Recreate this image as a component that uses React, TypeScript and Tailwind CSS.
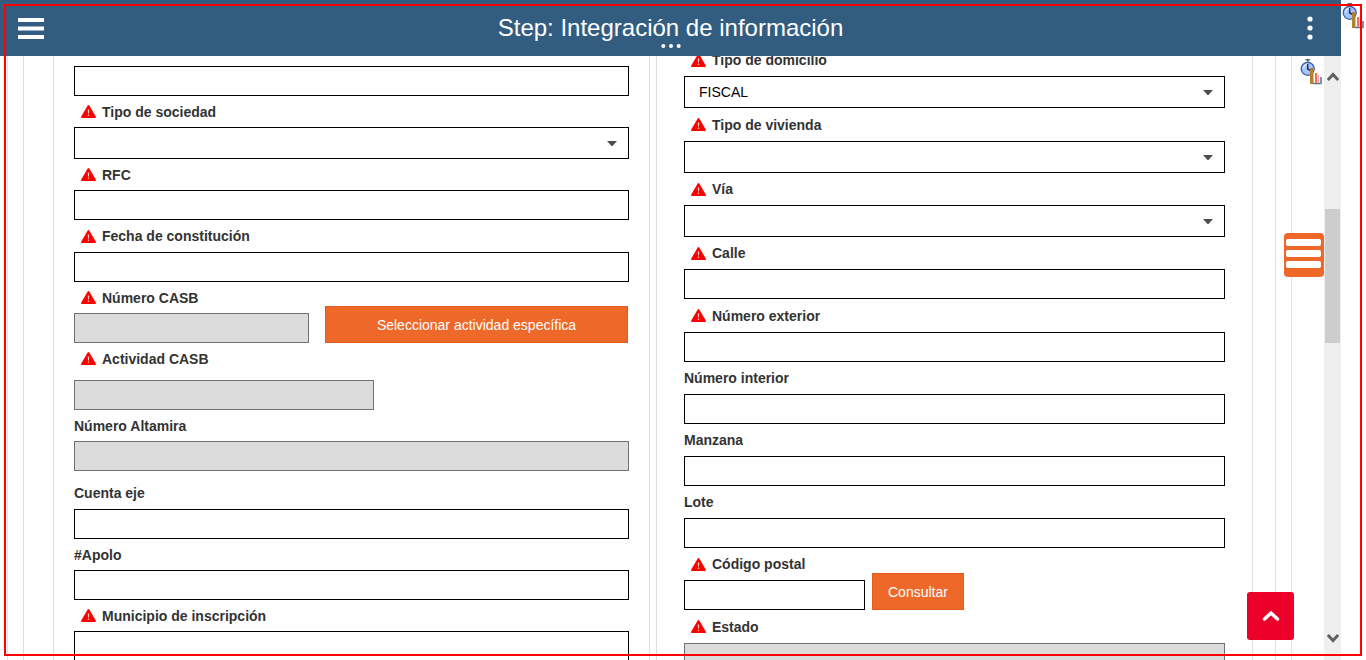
import type { ReactNode } from "react";

const labelHeights = {
  tight: "h-[31px]",
  normal: "h-[32px]",
  loose: "h-[33px]",
};

type Size = keyof typeof labelHeights;

function WarningIcon() {
  return (
    <svg viewBox="0 0 15 13" className="h-[13px] w-[15px] shrink-0" aria-hidden="true">
      <path d="M6.700.6a1 1 0 0 1 1.600 0l6.600 11.200a.8.8 0 0 1-.7 1.200H.8a.8.8 0 0 1-.7-1.200z" fill="#f00" />
      <path d="M6.800 4.500h1.400l-.2 4h-1z" fill="#ffd0d0" />
      <circle cx="7.500" cy="10.300" r=".8" fill="#ffd0d0" />
    </svg>
  );
}

function StopwatchIcon() {
  return (
    <svg viewBox="0 0 22 26" className="block h-[26px] w-[22px]" aria-hidden="true">
      <path d="M5.500.8h4.500M7.700 1v2.500" stroke="#47707c" strokeWidth="1.600" />
      <circle cx="7.700" cy="9.800" r="6.500" fill="#a3c4ff" stroke="#3d5c9c" strokeWidth="1.300" />
      <path d="M3.500 9.500a4.300 4.300 0 0 1 3.500-4" stroke="#dbe8ff" strokeWidth="1.500" fill="none" />
      <path d="M7.700 5v5l3 1.500" stroke="#1b2f78" strokeWidth="1.500" fill="none" />
      <path d="M13 24.500h8v-6" stroke="#56708c" strokeWidth="1.500" fill="none" />
      <path d="M10 9h3.500v16H10z" fill="#b08330" />
      <path d="M15 14h2.200v9.700H15z" fill="#ff6464" />
      <path d="M18 16h1v7.700h-1z" fill="#f7a0a0" />
      <path d="M20 18h2v7h-2z" fill="#7c93a8" />
    </svg>
  );
}

function FieldLabel({ id, text, required, size = "normal" }: { id: string; text: string; required?: boolean; size?: Size }) {
  return (
    <label htmlFor={id} className={`flex items-center gap-1.5 font-bold text-[#333] ${labelHeights[size]} ${required ? "pl-[7px]" : ""}`}>
      {required && <WarningIcon />}
      <span>{text}</span>
    </label>
  );
}

interface FieldProps {
  id: string;
  text: string;
  required?: boolean;
  disabled?: boolean;
  size?: Size;
  className?: string;
}

function TextField({ id, text, required, disabled, size, className = "" }: FieldProps) {
  return (
    <div className={className}>
      <FieldLabel id={id} text={text} required={required} size={size} />
      <TextBox id={id} disabled={disabled} />
    </div>
  );
}

function TextBox({ id, disabled, className = "w-full" }: { id: string; disabled?: boolean; className?: string }) {
  return (
    <input
      id={id}
      type="text"
      disabled={disabled}
      className={`block h-[30px] border border-black bg-white px-3.5 disabled:border-[#70707a] disabled:bg-[#dcdcdc] ${className}`}
    />
  );
}

function SelectField({ id, text, size, value }: { id: string; text: string; size?: Size; value?: string }) {
  return (
    <div>
      <FieldLabel id={id} text={text} required size={size} />
      <div className="relative">
        <select id={id} className="block h-8 w-full appearance-none border border-black bg-white px-3.5 text-black">
          <option>{value ?? ""}</option>
        </select>
        <svg viewBox="0 0 10 5" className="pointer-events-none absolute top-3.5 right-3 h-[5px] w-2.5" aria-hidden="true">
          <path d="M0 0h10L5.500 5h-1z" fill="#4d4d4d" />
        </svg>
      </div>
    </div>
  );
}

function ActionButton({ children, className = "" }: { children: ReactNode; className?: string }) {
  return (
    <button type="button" className={`h-[37px] border border-[#e35b1c] bg-[#ee6829] text-white ${className}`}>
      {children}
    </button>
  );
}

function CompanyPanel() {
  return (
    <section className="border-x border-[#ddd] px-5 pt-2.5">
      <input aria-label="Razón social" type="text" className="block h-[30px] w-full border border-black px-3.5" />
      <SelectField id="sociedad" text="Tipo de sociedad" size="tight" />
      <TextField id="rfc" text="RFC" required size="tight" />
      <TextField id="constitucion" text="Fecha de constitución" required />
      <div className="flex items-end gap-4 pr-px">
        <TextField id="casb" text="Número CASB" required disabled size="tight" className="w-[235px]" />
        <ActionButton className="flex-1">Seleccionar actividad específica</ActionButton>
      </div>
      <FieldLabel id="actividad" text="Actividad CASB" required size="tight" />
      <TextBox id="actividad" disabled className="mt-1.5 w-[300px]" />
      <TextField id="altamira" text="Número Altamira" disabled size="tight" />
      <TextField id="cuenta" text="Cuenta eje" className="mt-1.5" />
      <TextField id="apolo" text="#Apolo" size="tight" />
      <TextField id="municipio" text="Municipio de inscripción" required size="tight" />
    </section>
  );
}

function AddressPanel() {
  return (
    <section className="border-x border-[#ddd] px-[27px]">
      <div className="-mt-3">
        <SelectField id="domicilio" text="Tipo de domicilio" value="FISCAL" />
        <SelectField id="vivienda" text="Tipo de vivienda" size="loose" />
        <SelectField id="via" text="Vía" />
        <TextField id="calle" text="Calle" required />
        <TextField id="exterior" text="Número exterior" required size="loose" />
        <TextField id="interior" text="Número interior" />
        <TextField id="manzana" text="Manzana" />
        <TextField id="lote" text="Lote" />
        <div className="flex items-end gap-[7px]">
          <TextField id="postal" text="Código postal" required className="w-[181px]" />
          <ActionButton className="px-[15px]">Consultar</ActionButton>
        </div>
        <TextField id="estado" text="Estado" required disabled size="loose" />
      </div>
    </section>
  );
}

function ScrollRail() {
  return (
    <div className="flex w-[17px] shrink-0 flex-col items-center bg-[#efefef]" aria-hidden="true">
      <svg viewBox="0 0 12 9" className="mt-4 h-[9px] w-3">
        <path d="M.8 8L6 2.500 11.200 8" fill="none" stroke="#606060" strokeWidth="3" />
      </svg>
      <div className="mt-32 h-[134px] w-[15px] bg-[#cdcdcd]" />
      <svg viewBox="0 0 12 9" className="mt-auto mb-[17px] h-[9px] w-3">
        <path d="M.8 1L6 6.500 11.200 1" fill="none" stroke="#606060" strokeWidth="3" />
      </svg>
    </div>
  );
}

export default function App() {
  return (
    <div className="relative flex h-screen overflow-hidden bg-white font-['Liberation_Sans',Arial,sans-serif] text-[14px] leading-5">
      <div className="flex min-w-0 flex-1 flex-col">
        <header className="relative grid h-14 shrink-0 grid-cols-[1fr_auto_1fr] items-center bg-[#335d80] text-white">
          <button type="button" aria-label="Menú" className="ml-[18px] justify-self-start">
            <svg viewBox="0 0 26 21" className="block h-[21px] w-[26px]" aria-hidden="true">
              <path d="M0 2h26M0 10.500h26M0 19h26" stroke="#fff" strokeWidth="4" />
            </svg>
          </button>
          <h1 className="text-[24px] leading-7">Step: Integración de información</h1>
          <button type="button" aria-label="Opciones" className="mr-7 justify-self-end">
            <svg viewBox="0 0 6 24" className="block h-6 w-1.5" fill="#fff" aria-hidden="true">
              <circle cx="3" cy="3" r="2.600" />
              <circle cx="3" cy="12" r="2.600" />
              <circle cx="3" cy="21" r="2.600" />
            </svg>
          </button>
          <button type="button" aria-label="Más" className="absolute bottom-2 left-1/2 -translate-x-1/2">
            <svg viewBox="0 0 20 4" className="block h-1 w-5" fill="#fff" aria-hidden="true">
              <circle cx="2.300" cy="2" r="2" />
              <circle cx="10" cy="2" r="2" />
              <circle cx="17.700" cy="2" r="2" />
            </svg>
          </button>
        </header>
        <div className="flex min-h-0 flex-1">
          <main className="relative min-w-0 flex-1 overflow-hidden">
            <div className="mr-8 ml-[7px] min-h-full border-x border-[#e2e2e2] px-[15px]">
              <form className="grid grid-cols-2 gap-1.5 border-x border-[#ddd] pr-[22px] pl-[29px]">
                <CompanyPanel />
                <AddressPanel />
              </form>
            </div>
            <div className="absolute top-[3px] right-0.5">
              <StopwatchIcon />
            </div>
            <button type="button" aria-label="Secciones" className="absolute top-[177px] right-0 flex h-11 w-10 flex-col items-start gap-1 rounded bg-[#ee6829] pt-1.5 pl-0.5">
              <span className="h-[7px] w-[35px] rounded-xs bg-white" />
              <span className="h-[7px] w-[35px] rounded-xs bg-white" />
              <span className="h-[7px] w-[35px] rounded-xs bg-white" />
            </button>
            <button type="button" aria-label="Subir" className="absolute right-[30px] bottom-5 flex h-12 w-[47px] items-center justify-center rounded-[3px] bg-[#ec0029]">
              <svg viewBox="0 0 18 12" className="h-3 w-[18px]" aria-hidden="true">
                <path d="M2.500 9L9 3l6.500 6" fill="none" stroke="#fff" strokeWidth="3.400" strokeLinecap="round" />
              </svg>
            </button>
          </main>
          <ScrollRail />
        </div>
      </div>
      <aside className="w-[25px] shrink-0 pt-[3px] pl-px">
        <StopwatchIcon />
      </aside>
      <div className="pointer-events-none absolute inset-1 border-2 border-[#f00]" />
    </div>
  );
}
